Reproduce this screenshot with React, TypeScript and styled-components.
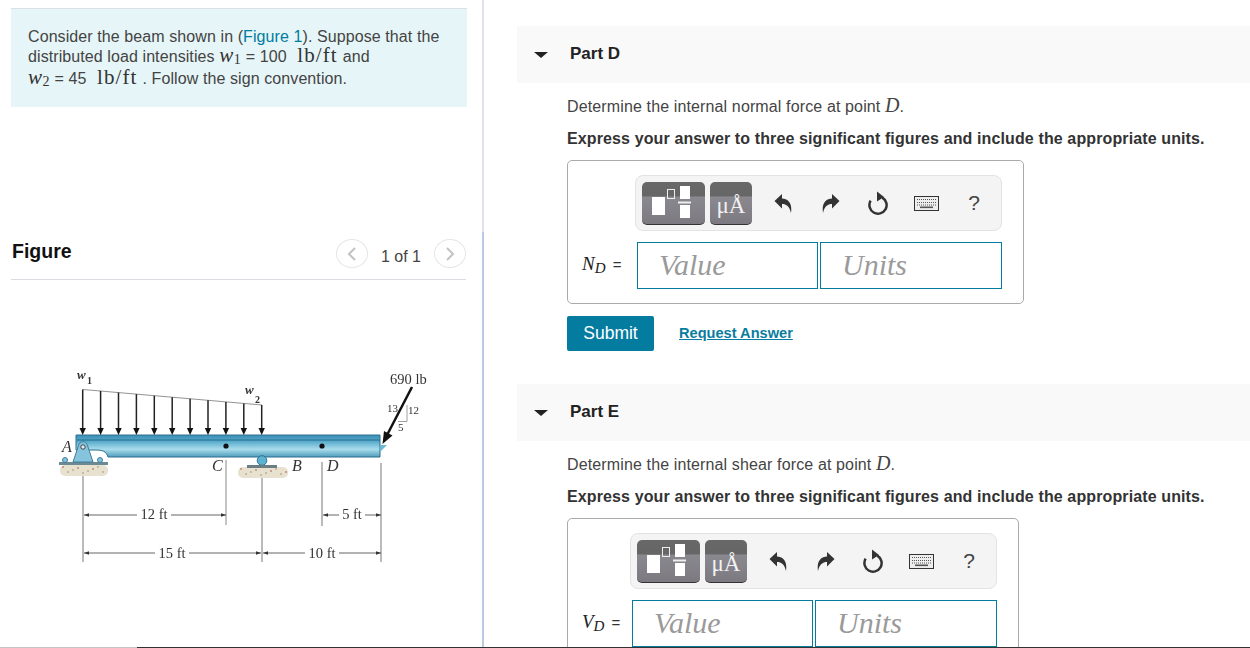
import React from "react";
import styled, { createGlobalStyle } from "styled-components";

const Global = createGlobalStyle`
  html, body { margin: 0; padding: 0; background: #fff; }
  body { font-family: "Liberation Sans", Arial, sans-serif; color: #333; }
`;

const Page = styled.div`
  position: relative;
  width: 1250px;
  height: 648px;
  overflow: hidden;
  display: flex;
  align-items: flex-start;
`;
const BottomEdge = styled.div`
  position: absolute;
  left: 0;
  right: 0;
  bottom: 0;
  height: 1px;
  background: linear-gradient(to right, #c4c4c4 137px, #333 137px);
`;
const LeftColumn = styled.aside`
  width: 484px;
  height: 648px;
  flex: none;
  display: flex;
  flex-direction: column;
`;
const StatementPane = styled.div`
  height: 232px;
  box-sizing: border-box;
  padding: 8px 15px 0 11px;
  border-right: 2px solid #dfe3e8;
`;
const Statement = styled.div`
  height: 99px;
  box-sizing: border-box;
  border-top: 1px solid #dce0e4;
  background: #e6f5f7;
  padding: 18px 0 0 17px;
  font-size: 16px;
  letter-spacing: 0.09px;
  line-height: 20px;
  color: #444;
`;
const StatementLine = styled.div<{ $h?: number }>`
  height: ${(p) => p.$h ?? 21}px;
  white-space: nowrap;
`;
const Link = styled.span`
  color: #007c9e;
`;
const MathVar = styled.span`
  font-family: "Liberation Serif", serif;
  font-style: italic;
  font-size: 21px;
  letter-spacing: 0.5px;
  color: #333;
  sub {
    font-style: normal;
    font-size: 14px;
    line-height: 0;
    vertical-align: -2px;
  }
`;
const MathUnit = styled.span`
  font-family: "Liberation Serif", serif;
  font-size: 21px;
  letter-spacing: 1.1px;
  color: #333;
  margin: 0 5px 0 6px;
`;
const FigurePane = styled.div`
  flex: 1;
  box-sizing: border-box;
  padding: 7px 16px 0 11px;
  border-right: 2px solid #b9cde2;
`;
const FigureBar = styled.div`
  height: 40px;
  display: flex;
  align-items: flex-start;
  border-bottom: 1px solid #d9dde1;
`;
const FigureTitle = styled.div`
  font-size: 19.5px;
  font-weight: 700;
  color: #111;
  line-height: 24px;
  padding-left: 1px;
  flex: 1;
`;
const Pager = styled.div`
  display: flex;
  align-items: center;
  gap: 13px;
  font-size: 16px;
  color: #444;
  height: 29px;
`;
const PagerCount = styled.span`
  padding-top: 7px;
`;
const PagerButton = styled.div`
  width: 30px;
  height: 27px;
  border: 1px solid #e6e6e6;
  border-radius: 50%;
  display: flex;
  align-items: center;
  justify-content: center;
`;
const BeamFigure = styled.svg`
  display: block;
  margin: 80px 0 0 39px;
  filter: blur(0.5px);
  text {
    font-family: "Liberation Serif", serif;
    fill: #333;
  }
`;

const RightColumn = styled.main`
  flex: 1;
  padding-top: 26px;
  margin-left: 33px;
`;
const PartHeader = styled.div`
  height: 57px;
  background: #f9f9f9;
  display: flex;
  align-items: center;
  padding-left: 17px;
`;
const Caret = styled.div`
  width: 0;
  height: 0;
  border-left: 7px solid transparent;
  border-right: 7px solid transparent;
  border-top: 6px solid #222;
  margin-right: 22px;
`;
const PartTitle = styled.div`
  font-size: 17px;
  font-weight: 700;
  color: #222;
  padding-bottom: 2px;
`;
const PartBody = styled.div`
  display: flow-root;
  padding: 0 0 0 50px;
  height: 301px;
`;
const Prompt = styled.div`
  margin-top: 11px;
  height: 22px;
  line-height: 22px;
  font-size: 16px;
  letter-spacing: 0.13px;
  color: #444;
  i {
    font-family: "Liberation Serif", serif;
    font-size: 20px;
  }
`;
const Instruction = styled.div`
  margin-top: 12px;
  height: 22px;
  line-height: 22px;
  font-size: 16px;
  font-weight: 700;
  letter-spacing: 0.12px;
  color: #333;
`;
const AnswerBox = styled.div<{ $w: number }>`
  margin-top: 10px;
  width: ${(p) => p.$w}px;
  height: 144px;
  box-sizing: border-box;
  border: 1px solid #aaa;
  border-radius: 5px;
  padding-top: 14px;
`;
const Toolbar = styled.div<{ $inset: number }>`
  margin-left: ${(p) => p.$inset}px;
  width: 367px;
  height: 56px;
  box-sizing: border-box;
  background: #f4f4f4;
  border: 1px solid #e3e3e3;
  border-radius: 8px;
  display: flex;
  align-items: center;
  padding-left: 6px;
`;
const ToolButton = styled.div<{ $w: number }>`
  width: ${(p) => p.$w}px;
  height: 43px;
  margin-right: 5px;
  box-sizing: border-box;
  border-radius: 5px;
  border-bottom: 1px solid #333;
  background: linear-gradient(to bottom, #686868 0, #666 34%, #8b8990 35%, #7c7a80 100%);
  display: flex;
  align-items: center;
  justify-content: center;
  flex: none;
`;
const UnitGlyph = styled.span`
  font-family: "Liberation Serif", serif;
  font-size: 23px;
  color: #f2f2f2;
  padding-top: 6px;
`;
const ToolIcons = styled.div`
  display: flex;
  align-items: center;
  margin-left: 2px;
`;
const ToolIcon = styled.div`
  width: 47.8px;
  flex: none;
  display: flex;
  justify-content: center;
  align-items: center;
`;
const Help = styled.span`
  font-size: 21px;
  color: #444;
  line-height: 24px;
`;
const InputRow = styled.div`
  margin-top: 11px;
  display: flex;
  align-items: center;
`;
const Label = styled.div<{ $inset: number }>`
  width: ${(p) => p.$inset}px;
  flex: none;
  box-sizing: border-box;
  padding: 0 0 3px 14px;
  font-size: 15px;
  color: #333;
  white-space: nowrap;
  i {
    font-family: "Liberation Serif", serif;
    font-size: 19px;
    color: #222;
  }
  sub {
    font-family: "Liberation Serif", serif;
    font-style: italic;
    font-size: 15px;
    line-height: 0;
    margin-right: 3px;
    vertical-align: -3px;
    color: #222;
  }
`;
const Field = styled.div<{ $w: number }>`
  width: ${(p) => p.$w}px;
  height: 47px;
  box-sizing: border-box;
  border: 1px solid #047c9e;
  margin-right: 2px;
  padding-left: 21px;
  font-family: "Liberation Serif", serif;
  font-style: italic;
  font-size: 30px;
  line-height: 43px;
  color: #9a9a9a;
  flex: none;
`;
const Actions = styled.div`
  margin-top: 12px;
  display: flex;
  align-items: center;
  gap: 25px;
`;
const Submit = styled.div`
  width: 87px;
  height: 35px;
  background: #047ca0;
  border-radius: 2px;
  color: #fff;
  font-size: 17.5px;
  line-height: 35px;
  text-align: center;
`;
const RequestLink = styled.span`
  font-size: 14.6px;
  font-weight: 700;
  color: #0a7ca0;
  text-decoration: underline;
  padding-bottom: 2px;
`;

const Chevron = ({ right }: { right?: boolean }) => (
  <svg width="10" height="14" viewBox="0 0 10 14" fill="none" stroke="#c2c2c2" strokeWidth="2">
    <path d={right ? "M2 1l6 6-6 6" : "M8 1L2 7l6 6"} />
  </svg>
);

const MatrixIcon = () => (
  <svg width="63" height="43" viewBox="0 0 63 43">
    <rect x="10" y="16" width="13" height="18" fill="#fff" />
    <rect x="25.5" y="8.5" width="7" height="9" fill="none" stroke="#eee" strokeWidth="1" />
    <rect x="38" y="5" width="10" height="13" fill="#fff" />
    <rect x="36" y="20.5" width="13" height="2" fill="#eee" />
    <rect x="38" y="24" width="10" height="13" fill="#fff" />
  </svg>
);
const ArrowIcon = ({ flip }: { flip?: boolean }) => (
  <svg width="18" height="20" viewBox="0 0 18 20" style={flip ? { transform: "scaleX(-1)" } : undefined}>
    <path d="M0.5 8 L8 1 V5.5 C14 5.5 18.5 10 17 20 C15.5 13.5 12.5 11 8 11 V15.5 Z" fill="#333" />
  </svg>
);
const ResetIcon = () => (
  <svg width="22" height="24" viewBox="0 0 22 24" fill="none">
    <path d="M3.6 9.7 A8.6 8.6 0 1 0 15.3 6.6" stroke="#333" strokeWidth="2.5" />
    <path d="M10 0.5 L17 6 L10 10.5 Z" fill="#333" />
  </svg>
);
const KeyboardIcon = () => (
  <svg width="25" height="15" viewBox="0 0 25 15">
    <rect x="0.5" y="0.5" width="24" height="14" fill="#eee" stroke="#333" />
    <path d="M3 3.5h19M3 6.5h19M3 9h19" stroke="#555" strokeWidth="1.2" strokeDasharray="1 1" />
    <rect x="6" y="10.5" width="13" height="1.6" fill="#555" />
  </svg>
);

const ARROWS = Array.from({ length: 11 }, (_, i) => 82.7 + i * 17.9);

const Dim = ({ x1, x2, y }: { x1: number; x2: number; y: number }) => (
  <g>
    <line x1={x1} x2={x2} y1={y} y2={y} stroke="#555" strokeWidth="0.9" />
    <path d={`M${x1} ${y}l5 -1.8v3.6z`} fill="#333" />
    <path d={`M${x2} ${y}l-5 -1.8v3.6z`} fill="#333" />
  </g>
);
const DimLabel = ({ x, y, w, children }: { x: number; y: number; w: number; children: React.ReactNode }) => (
  <>
    <rect x={x - w / 2} y={y - 7} width={w} height="14" fill="#fff" />
    <text x={x} y={y + 4.5} fontSize="14.5" textAnchor="middle">{children}</text>
  </>
);
const Ground = ({ x, w, y }: { x: number; w: number; y: number }) => (
  <g>
    <rect x={x} y={y} width={w} height="11" rx="5" fill="#e9e1cf" />
    {Array.from({ length: Math.floor(w / 5) }, (_, i) => (
      <circle key={i} cx={x + 3 + i * 5} cy={y + 2 + ((i * 5) % 7)} r="0.8" fill={i % 3 ? "#a08a6a" : "#a5533a"} />
    ))}
  </g>
);

const Beam = () => (
  <BeamFigure width="400" height="220" viewBox="50 360 400 220">
    <defs>
      <linearGradient id="beamFill" x1="0" y1="0" x2="0" y2="1">
        <stop offset="0" stopColor="#3d8fb5" />
        <stop offset="0.25" stopColor="#4fa5c8" />
        <stop offset="0.65" stopColor="#a9dcec" />
        <stop offset="1" stopColor="#4f9cbc" />
      </linearGradient>
    </defs>

    <line x1="83" y1="475" x2="83" y2="562" stroke="#777" />
    <line x1="226" y1="460" x2="226" y2="525" stroke="#888" />
    <line x1="262" y1="478" x2="262" y2="562" stroke="#777" />
    <line x1="322" y1="462" x2="322" y2="526" stroke="#777" />
    <line x1="381" y1="463" x2="381" y2="562" stroke="#777" />
    <Dim x1={84} x2={226} y={515} />
    <Dim x1={84} x2={261} y={553} />
    <Dim x1={323} x2={381} y={515} />
    <Dim x1={263} x2={381} y={553} />
    <DimLabel x={154} y={514} w={34}>12 ft</DimLabel>
    <DimLabel x={172} y={553} w={34}>15 ft</DimLabel>
    <DimLabel x={352} y={514} w={26}>5 ft</DimLabel>
    <DimLabel x={322} y={553} w={34}>10 ft</DimLabel>

    <Ground x={60} w={48} y={465} />
    <Ground x={238} w={50} y={467} />

    <path d="M76 435 H380 V457 H108 C106 451 103 450 94 450 H76 Z" fill="url(#beamFill)" stroke="#2d6f8f" strokeWidth="1" />
    <line x1="77" y1="440" x2="380" y2="440" stroke="#2b6c8c" strokeWidth="1" />
    <rect x="59" y="462" width="49" height="3" fill="#6d8a94" />
    <path d="M73 462 L78 447 C79 440 87 440 88 447 L93 462 Z" fill="#86c3dc" stroke="#3f7f9c" />
    <circle cx="83" cy="447" r="2.2" fill="#dfeef3" stroke="#444" />
    <circle cx="65" cy="460" r="2.5" fill="#86c3dc" stroke="#3f7f9c" />
    <circle cx="100" cy="460" r="2.5" fill="#86c3dc" stroke="#3f7f9c" />
    <circle cx="262" cy="460.5" r="4.8" fill="#5db1d1" stroke="#2d6f8f" />
    <rect x="247" y="465" width="30" height="3" fill="#6d7d84" />
    <circle cx="226" cy="446" r="2.6" fill="#111" />
    <circle cx="322" cy="446" r="2.6" fill="#111" />
    <path d="M380 445 L387 445 L380 452 Z" fill="#6db8d4" />

    <line x1="83" y1="389.5" x2="262" y2="405" stroke="#777" strokeWidth="0.8" />
    {ARROWS.map((x) => (
      <g key={x}>
        <line x1={x} x2={x} y1={389.5 + (x - 83) * 0.0866} y2="430" stroke="#222" strokeWidth="1.5" />
        <path d={`M${x} 435 l-3.2 -7 h6.4 z`} fill="#111" />
      </g>
    ))}
    <text x="77" y="379" fontSize="13" fontStyle="italic" fontWeight="700">w</text>
    <text x="87" y="384" fontSize="10" fontWeight="700">1</text>
    <text x="245" y="394" fontSize="13" fontStyle="italic" fontWeight="700">w</text>
    <text x="255" y="403" fontSize="10" fontWeight="700">2</text>

    <line x1="412" y1="387" x2="386" y2="437" stroke="#111" strokeWidth="2.5" />
    <path d="M382.5 444 L384 431 L392.5 435.5 Z" fill="#111" />
    <path d="M407 405 V421.5 H398" fill="none" stroke="#888" strokeWidth="0.8" />
    <text x="390" y="384" fontSize="14.5">690 lb</text>
    <text x="387" y="412" fontSize="11">13</text>
    <text x="408" y="414" fontSize="11">12</text>
    <text x="398" y="431" fontSize="11">5</text>

    <text x="62" y="452" fontSize="16" fontStyle="italic">A</text>
    <text x="212" y="471" fontSize="16" fontStyle="italic">C</text>
    <text x="292" y="471" fontSize="16" fontStyle="italic">B</text>
    <text x="327" y="471" fontSize="16" fontStyle="italic">D</text>
  </BeamFigure>
);

const Part = ({ title, prompt, label, sub, inset, boxWidth, submit }: {
  title: string; prompt: string; label: string; sub: string; inset: number; boxWidth: number; submit?: boolean;
}) => (
  <section>
    <PartHeader>
      <Caret />
      <PartTitle>{title}</PartTitle>
    </PartHeader>
    <PartBody>
      <Prompt>{prompt} <i>D</i>.</Prompt>
      <Instruction>Express your answer to three significant figures and include the appropriate units.</Instruction>
      <AnswerBox $w={boxWidth}>
        <Toolbar $inset={inset - 2}>
          <ToolButton $w={63}><MatrixIcon /></ToolButton>
          <ToolButton $w={42}><UnitGlyph>μÅ</UnitGlyph></ToolButton>
          <ToolIcons>
            <ToolIcon><ArrowIcon /></ToolIcon>
            <ToolIcon><ArrowIcon flip /></ToolIcon>
            <ToolIcon><ResetIcon /></ToolIcon>
            <ToolIcon><KeyboardIcon /></ToolIcon>
            <ToolIcon><Help>?</Help></ToolIcon>
          </ToolIcons>
        </Toolbar>
        <InputRow>
          <Label $inset={inset}><i>{label}</i><sub>{sub}</sub> =</Label>
          <Field $w={181}>Value</Field>
          <Field $w={182}>Units</Field>
        </InputRow>
      </AnswerBox>
      {submit && (
        <Actions>
          <Submit>Submit</Submit>
          <RequestLink>Request Answer</RequestLink>
        </Actions>
      )}
    </PartBody>
  </section>
);

export default function App() {
  return (
    <Page>
      <Global />
      <LeftColumn>
        <StatementPane>
          <Statement>
            <StatementLine $h={18}>Consider the beam shown in (<Link>Figure 1</Link>). Suppose that the</StatementLine>
            <StatementLine $h={22}>
              distributed load intensities <MathVar>w<sub>1</sub></MathVar> = 100 <MathUnit>lb/ft</MathUnit>and
            </StatementLine>
            <StatementLine>
              <MathVar>w<sub>2</sub></MathVar> = 45 <MathUnit>lb/ft</MathUnit>. Follow the sign convention.
            </StatementLine>
          </Statement>
        </StatementPane>
        <FigurePane>
          <FigureBar>
            <FigureTitle>Figure</FigureTitle>
            <Pager>
              <PagerButton><Chevron /></PagerButton>
              <PagerCount>1 of 1</PagerCount>
              <PagerButton><Chevron right /></PagerButton>
            </Pager>
          </FigureBar>
          <Beam />
        </FigurePane>
      </LeftColumn>
      <RightColumn>
        <Part title="Part D" prompt="Determine the internal normal force at point" label="N" sub="D" inset={69} boxWidth={457} submit />
        <Part title="Part E" prompt="Determine the internal shear force at point" label="V" sub="D" inset={64} boxWidth={452} />
      </RightColumn>
      <BottomEdge />
    </Page>
  );
}
